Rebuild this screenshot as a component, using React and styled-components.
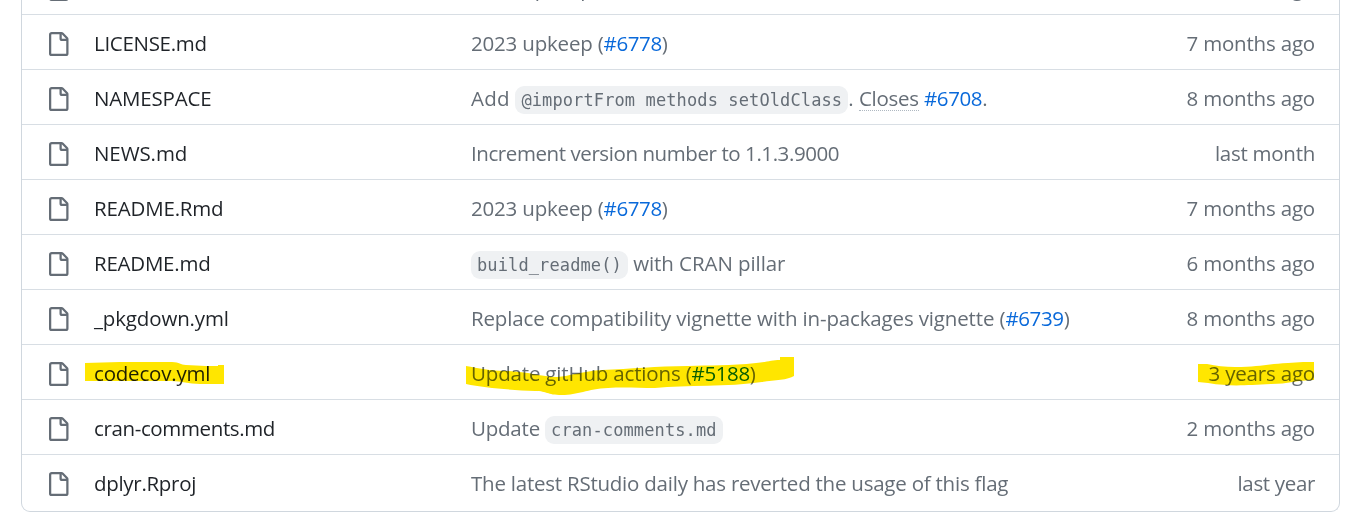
import React from "react";
import styled, { createGlobalStyle } from "styled-components";

const GlobalStyle = createGlobalStyle`
  * { box-sizing: border-box; }
  body {
    margin: 0;
    background: #fff;
    font: 20.5px/52px "Open Sans", "Noto Sans", sans-serif;
    color: #656d76;
  }
`;

const Viewport = styled.main`
  width: 1368px;
  height: 525px;
  overflow: hidden;
`;

const FileTable = styled.div`
  width: 1319px;
  height: 553px;
  margin: -41px 0 0 21px;
  border: 1px solid #d0d7de;
  border-top: 0;
  border-radius: 0 0 9px 9px;
`;

const Row = styled.div`
  display: grid;
  grid-template-columns: 48px 377px 1fr auto;
  height: 55px;
  padding: 2px 24px 0;
  border-top: 1px solid #d8dee4;
`;

const Cell = styled.div`
  position: relative;
  height: 52px;
  white-space: pre;
`;

const Name = styled(Cell)`
  color: #1f2328;
`;

const Text = styled.span`
  letter-spacing: ${(p) => p.$track || 0}px;
`;

const Link = styled.a`
  color: #0969da;
  letter-spacing: -0.38px;
`;

const Closes = styled.span`
  display: inline-block;
  height: 26px;
  line-height: 26px;
  letter-spacing: -0.3px;
  border-bottom: 1px dotted #afb8c1;
`;

const Code = styled.code`
  display: inline-block;
  height: 28px;
  padding: 0 6px;
  border-radius: 9px;
  background: #eff1f3;
  font: 17px/28px "DejaVu Sans Mono", monospace;
  letter-spacing: 0.115px;
`;

const Icon = styled.svg`
  display: block;
  width: 24px;
  height: 24px;
  margin-top: 15px;
  fill: #656d76;
`;

const Marker = styled.svg`
  position: absolute;
  left: ${(p) => p.$left}px;
  top: 9px;
  width: ${(p) => p.$width}px;
  height: 40px;
  fill: #ffe600;
  mix-blend-mode: multiply;
  pointer-events: none;
`;

const FileIcon = () => (
  <Icon viewBox="0 0 16 16" aria-hidden="true">
    <path d="M2 1.75C2 .784 2.784 0 3.75 0h6.586c.464 0 .909.184 1.237.513l2.914 2.914c.329.328.513.773.513 1.237v9.586A1.75 1.75 0 0 1 13.25 16h-9.5A1.75 1.75 0 0 1 2 14.25Zm1.75-.25a.25.25 0 0 0-.25.25v12.5c0 .138.112.25.25.25h9.5a.25.25 0 0 0 .25-.25V6h-2.75A1.75 1.75 0 0 1 9 4.25V1.5Zm6.75.062V4.25c0 .138.112.25.25.25h2.688l-.011-.013-2.914-2.914-.013-.011Z" />
  </Icon>
);

const NameMark = () => (
  <Marker $left={-9} $width={140} viewBox="0 0 140 40">
    <path d="M0 7L35 6H87C95 6 95 9 101 9L121 10H133V9H139V28H115C103 28 97 25 86 25L0 25Z" />
  </Marker>
);

const MessageMark = () => (
  <Marker $left={-5} $width={328} viewBox="0 0 328 40">
    <path d="M0 10C12 12 25 15 39 15C60 15 75 21 91 21C104 20 117 15 136 14C165 13 190 10 222 10C244 9 264 10 290 7C302 6 305 4 314 4V1H328V20C322 24 309 24 296 26C262 31 220 29 189 32C172 32 158 31 142 32C121 33 112 39 96 39C80 39 82 35 69 35C45 34 18 32 0 28Z" />
  </Marker>
);

const AgeMark = () => (
  <Marker $left={-11} $width={117} viewBox="0 0 117 40">
    <path d="M0 8L9 8C18 10 27 11 37 11C62 11 68 8 90 7L105 6H116V24C99 24 90 28 73 28C48 29 34 31 10 27L0 26Z" />
  </Marker>
);

const Upkeep = () => (
  <>
    <Text $track={-0.19}>2023 upkeep (</Text>
    <Link>#6778</Link>)
  </>
);

const files = [
  { name: "LICENSE.md", track: -0.3, message: <Upkeep />, age: "7 months ago" },
  { name: "LICENSE.md", track: -0.3, message: <Upkeep />, age: "7 months ago" },
  {
    name: "NAMESPACE",
    track: -0.18,
    message: (
      <>
        <Text $track={0.25}>{"Add "}</Text>
        <Code>@importFrom methods setOldClass</Code>
        {". "}
        <Closes>Closes</Closes> <Link>#6708</Link>.
      </>
    ),
    age: "8 months ago",
  },
  {
    name: "NEWS.md",
    track: -0.1,
    message: <Text $track={-0.42}>Increment version number to 1.1.3.9000</Text>,
    age: "last month",
    ageTrack: -0.27,
  },
  { name: "README.Rmd", track: -0.18, message: <Upkeep />, age: "7 months ago" },
  {
    name: "README.md",
    track: -0.24,
    message: (
      <>
        <Code>build_readme()</Code>
        <Text $track={-0.07}>{" with CRAN pillar"}</Text>
      </>
    ),
    age: "6 months ago",
  },
  {
    name: "_pkgdown.yml",
    track: -0.15,
    message: (
      <>
        <Text $track={-0.147}>Replace compatibility vignette with in-packages vignette (</Text>
        <Link>#6739</Link>)
      </>
    ),
    age: "8 months ago",
  },
  {
    name: "codecov.yml",
    track: -0.19,
    marked: true,
    message: (
      <>
        <Text $track={-0.17}>Update gitHub actions (</Text>
        <Link>#5188</Link>)
      </>
    ),
    age: "3 years ago",
  },
  {
    name: "cran-comments.md",
    track: -0.37,
    message: (
      <>
        <Text $track={-0.22}>{"Update "}</Text>
        <Code>cran-comments.md</Code>
      </>
    ),
    age: "2 months ago",
  },
  {
    name: "dplyr.Rproj",
    track: -0.3,
    message: <Text $track={-0.23}>The latest RStudio daily has reverted the usage of this flag</Text>,
    age: "last year",
    ageTrack: -0.34,
  },
];

export default function App() {
  return (
    <Viewport>
      <GlobalStyle />
      <FileTable>
        {files.map((file, i) => (
          <Row key={i}>
            <FileIcon />
            <Name>
              <Text $track={file.track}>{file.name}</Text>
              {file.marked && <NameMark />}
            </Name>
            <Cell>
              {file.message}
              {file.marked && <MessageMark />}
            </Cell>
            <Cell>
              <Text $track={file.ageTrack || -0.19}>{file.age}</Text>
              {file.marked && <AgeMark />}
            </Cell>
          </Row>
        ))}
      </FileTable>
    </Viewport>
  );
}
